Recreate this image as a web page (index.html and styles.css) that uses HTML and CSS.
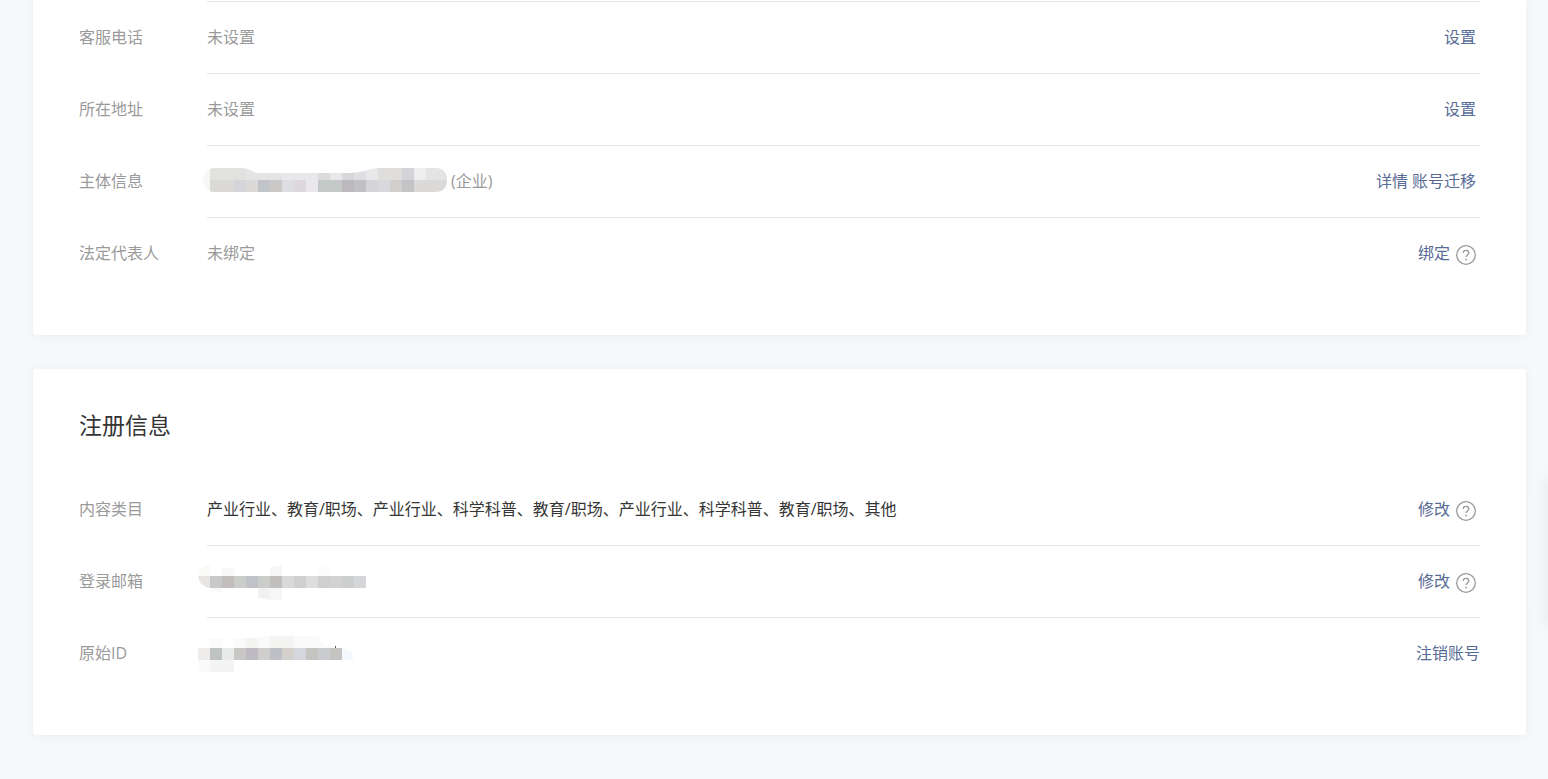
FILE: index.html
```html
<!DOCTYPE html>
<html lang="zh-CN">

<head>
    <meta charset="UTF-8">
    <meta name="viewport" content="width=device-width, initial-scale=1.0">
    <title>账号详情</title>
    <link rel="stylesheet" href="styles.css">
</head>

<body>
    <!-- 问号图标 -->
    <svg class="symbols" aria-hidden="true">
        <symbol id="icon-help" viewBox="0 0 20 20">
            <circle cx="10" cy="10" r="9.3" fill="none" stroke="#9a9a9a" stroke-width="1.3" />
            <path d="M7.2 8.1C7.2 6.3 8.4 5.3 10 5.3S12.8 6.3 12.8 7.8C12.8 9.6 10.1 9.8 10.1 12.1" fill="none" stroke="#9a9a9a" stroke-width="1.3" />
            <circle cx="10.1" cy="14.5" r="0.9" fill="#9a9a9a" />
        </symbol>
    </svg>

    <div class="card card-top">
        <div class="row">
            <div class="label">客服电话</div>
            <div class="content">
                <div class="value">未设置</div>
                <div class="actions"><a href="#">设置</a></div>
            </div>
        </div>
        <div class="row">
            <div class="label">所在地址</div>
            <div class="content">
                <div class="value">未设置</div>
                <div class="actions"><a href="#">设置</a></div>
            </div>
        </div>
        <div class="row">
            <div class="label">主体信息</div>
            <div class="content">
                <div class="value">
                    <svg class="mosaic" width="253" height="26" viewBox="0 0 253 26" aria-hidden="true">
                        <clipPath id="clip-name">
                            <path d="M5 12Q5 0 18 0H42C52 0 54 5 62 5H150C168 5 168 0 184 0H237Q249 0 249 12T237 24H17Q5 24 5 12Z" />
                        </clipPath>
                        <g clip-path="url(#clip-name)" shape-rendering="crispEdges">
                            <rect width="253" height="24" fill="#f7f7f5" />
                            <path fill="#e1e1df" d="M12 0h36v12H12z" />
                            <path fill="#e4e4e5" d="M48 0h36v12H48zM216 0h37v12H216z" />
                            <path fill="#e8e8ea" d="M84 0h36v12H84zM132 0h12v12H132zM168 0h12v12H168z" />
                            <path fill="#dbdbda" d="M120 0h12v12H120z" />
                            <path fill="#d7d7db" d="M144 0h12v12H144z" />
                            <path fill="#dedee3" d="M156 0h12v12H156z" />
                            <path fill="#dfdedc" d="M180 0h24v12H180z" />
                            <path fill="#d3d4d7" d="M204 0h12v12H204z" />
                            <path fill="#eeeeee" d="M216 0h12v12H216z" />
                            <path fill="#dbdad8" d="M12 12h24v12H12zM48 12h12v12H48zM216 12h37v12H216z" />
                            <path fill="#d5d4d8" d="M36 12h12v12H36zM168 12h12v12H168z" />
                            <path fill="#c1c5c9" d="M60 12h12v12H60z" />
                            <path fill="#cac9c7" d="M72 12h12v12H72z" />
                            <path fill="#dcdee1" d="M84 12h12v12H84z" />
                            <path fill="#dcd8de" d="M96 12h12v12H96z" />
                            <path fill="#eae8ed" d="M108 12h12v12H108z" />
                            <path fill="#c4c9c8" d="M120 12h24v12H120z" />
                            <path fill="#bbb9be" d="M144 12h12v12H144z" />
                            <path fill="#c1c0c4" d="M156 12h12v12H156z" />
                            <path fill="#d9d9dd" d="M180 12h12v12H180z" />
                            <path fill="#d1cfce" d="M192 12h12v12H192z" />
                            <path fill="#c4c4c7" d="M204 12h12v12H204z" />
                        </g>
                    </svg>
                    <span>(企业)</span>
                </div>
                <div class="actions"><a href="#">详情</a> <a href="#">账号迁移</a></div>
            </div>
        </div>
        <div class="row">
            <div class="label">法定代表人</div>
            <div class="content">
                <div class="value">未绑定</div>
                <div class="actions">
                    <a href="#">绑定</a>
                    <button class="help" type="button" aria-label="帮助"><svg><use href="#icon-help" /></svg></button>
                </div>
            </div>
        </div>
    </div>

    <div class="card">
        <h2 class="title">注册信息</h2>
        <div class="row">
            <div class="label">内容类目</div>
            <div class="content">
                <div class="value dark">产业行业、教育/职场、产业行业、科学科普、教育/职场、产业行业、科学科普、教育/职场、其他</div>
                <div class="actions">
                    <a href="#">修改</a>
                    <button class="help" type="button" aria-label="帮助"><svg><use href="#icon-help" /></svg></button>
                </div>
            </div>
        </div>
        <div class="row">
            <div class="label">登录邮箱</div>
            <div class="content">
                <div class="value">
                    <svg class="mosaic" width="168" height="34" viewBox="0 0 168 34" aria-hidden="true">
                        <path fill="#fafaf8" d="M0 12Q1 1 12 1V12z" />
                        <path fill="#e7e6e4" d="M0 12H12V24Q1 22 0 12z" />
                        <path fill="#f8f8f8" d="M12 24H24V28Q16 27 12 24zM24 4L36 5V12H24z" />
                        <path fill="#f6f6f6" d="M72 3L84 1V12H72zM72 24H84V36H72z" />
                        <path fill="#fcfcfc" d="M120 1L132 2V12H120z" />
                        <path fill="#f1f1f1" d="M60 24H72V36L60 34z" />
                        <g shape-rendering="crispEdges">
                            <path fill="#c9c9c9" d="M12 12h12v12H12z" />
                            <path fill="#c3bebe" d="M24 12h12v12H24z" />
                            <path fill="#cacdca" d="M36 12h12v12H36zM60 12h12v12H60z" />
                            <path fill="#c1c2c9" d="M48 12h12v12H48z" />
                            <path fill="#c1bfbd" d="M72 12h12v12H72z" />
                            <path fill="#d8dad9" d="M84 12h12v12H84z" />
                            <path fill="#cfcfcf" d="M96 12h12v12H96zM120 12h12v12H120z" />
                            <path fill="#dddddd" d="M108 12h12v12H108z" />
                            <path fill="#d2d2d2" d="M132 12h12v12H132z" />
                            <path fill="#cccfcd" d="M144 12h12v12H144z" />
                            <path fill="#d4d6d9" d="M156 12h12v12H156z" />
                        </g>
                    </svg>
                </div>
                <div class="actions">
                    <a href="#">修改</a>
                    <button class="help" type="button" aria-label="帮助"><svg><use href="#icon-help" /></svg></button>
                </div>
            </div>
        </div>
        <div class="row">
            <div class="label">原始ID</div>
            <div class="content">
                <div class="value">
                    <svg class="mosaic" width="156" height="34" viewBox="0 0 156 34" aria-hidden="true">
                        <path fill="#fafafa" d="M12 2H24V12H12zM36 2H60L70 0H118C124 2 122 8 132 12H36z" />
                        <path fill="#f4f4f3" d="M48 2H60V12H48zM72 0H96V12H72z" />
                        <path fill="#fafafa" d="M0 24H12V36H5Q0 35 0 30z" />
                        <path fill="#f4f4f4" d="M12 24H36V36H12z" />
                        <path fill="#f5f9fd" d="M144 12Q154 13 156 24H144z" />
                        <g shape-rendering="crispEdges">
                            <path fill="#efedec" d="M0 12h12v12H0z" />
                            <path fill="#bfc3c1" d="M12 12h12v12H12z" />
                            <path fill="#e7eae9" d="M24 12h12v12H24z" />
                            <path fill="#c8c7c3" d="M36 12h12v12H36z" />
                            <path fill="#bdbac1" d="M48 12h12v12H48z" />
                            <path fill="#cfcecb" d="M60 12h12v12H60z" />
                            <path fill="#bfc0c6" d="M72 12h12v12H72z" />
                            <path fill="#d4d0cc" d="M84 12h12v12H84z" />
                            <path fill="#d5d6de" d="M96 12h12v12H96z" />
                            <path fill="#c5c4c0" d="M108 12h12v12H108zM132 12h12v12H132z" />
                            <path fill="#c9cbce" d="M120 12h12v12H120z" />
                            <path fill="#555555" d="M137 10h1v2H137z" />
                        </g>
                    </svg>
                </div>
                <div class="actions actions-end"><a href="#">注销账号</a></div>
            </div>
        </div>
    </div>

    <!-- 右侧悬浮栏，收起在窗口外 -->
    <div class="side-panel"></div>
</body>

</html>
```

FILE: styles.css
```css
* {
    box-sizing: border-box;
}

body {
    margin: 0;
    padding: 0 22px 44px 33px;
    overflow-x: hidden;
    font-family: "Open Sans", "Noto Sans CJK SC", sans-serif;
    font-size: 16px;
    line-height: 24px;
    color: #353535;
    background-color: #f7f8fa;
}

.symbols {
    position: absolute;
    width: 0;
    height: 0;
}

.card {
    padding: 40px 46px 46px;
    margin-bottom: 34px;
    background-color: #fff;
    border-radius: 4px;
    box-shadow: 0 1px 10px rgba(0, 0, 0, 0.05);
}

.card:last-of-type {
    margin-bottom: 0;
}

.card-top {
    padding-top: 1px;
    border-radius: 0 0 4px 4px;
}

.title {
    margin: 0 0 32px;
    font-size: 23px;
    font-weight: 400;
    line-height: 32px;
}

.row {
    display: flex;
    height: 72px;
}

.label {
    display: flex;
    align-items: center;
    width: 128px;
    flex-shrink: 0;
    color: #9a9a9a;
}

.content {
    flex: 1;
    display: flex;
    justify-content: space-between;
    align-items: center;
    padding-bottom: 1px;
    border-top: 1px solid transparent;
}

.row + .row .content,
.card-top .content {
    border-top-color: #e4e5e7;
}

.value {
    display: flex;
    align-items: center;
    color: #9a9a9a;
}

.dark {
    color: #353535;
}

.mosaic {
    display: block;
    margin-left: -9px;
    overflow: visible;
}

.actions {
    display: flex;
    align-items: center;
    gap: 4px;
    padding-right: 4px;
    white-space: nowrap;
}

.actions-end {
    padding-right: 0;
}

.actions a {
    color: #576b95;
    text-decoration: none;
}

.help {
    width: 22px;
    height: 20px;
    padding: 0 0 0 2px;
    margin-top: 4px;
    border: none;
    background: none;
    cursor: pointer;
}

.help svg {
    display: block;
    width: 20px;
    height: 20px;
}

.side-panel {
    position: fixed;
    top: 480px;
    right: -40px;
    width: 40px;
    height: 146px;
    box-shadow: 0 0 20px rgba(0, 0, 0, 0.08);
}
```
